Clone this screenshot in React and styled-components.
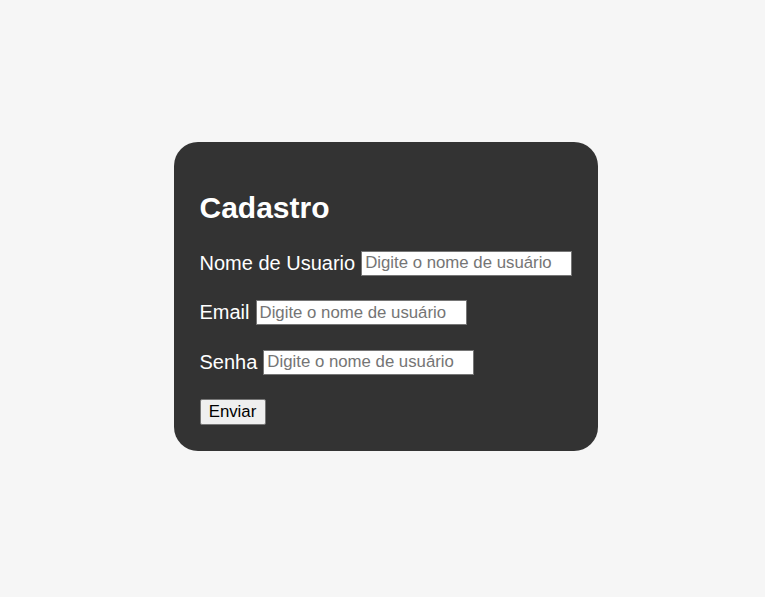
import React from 'react'
import styled, { createGlobalStyle } from 'styled-components'

const GlobalStyle = createGlobalStyle`
  html, body {
    margin: 0;
    padding: 0;
    background: #f6f6f6;
    font-family: "Liberation Sans", Arial, sans-serif;
  }
`

const Page = styled.div`
  min-height: 100vh;
  box-sizing: border-box;
  display: flex;
  align-items: center;
  justify-content: center;
  padding: 0 0 4px 6px;
`

const Card = styled.form`
  width: 424px;
  box-sizing: border-box;
  background: #333333;
  border-radius: 24px;
  padding: 51px 26px 26px 26px;
  display: flex;
  flex-direction: column;
  align-items: flex-start;
  color: #ffffff;
`

const Title = styled.h1`
  margin: 0 0 28px 0;
  font-size: 30px;
  line-height: 30px;
  font-weight: bold;
`

const Fields = styled.div`
  display: flex;
  flex-direction: column;
  gap: 24.5px;
`

const Row = styled.div`
  display: flex;
  align-items: center;
  gap: 6px;
  height: 25px;
`

const Label = styled.label`
  font-size: 20px;
  line-height: 23px;
  white-space: nowrap;
`

const Input = styled.input`
  width: 211px;
  height: 25px;
  box-sizing: border-box;
  border: 1px solid #767676;
  border-radius: 0;
  padding: 1px 3px;
  font-family: "Liberation Sans", Arial, sans-serif;
  font-size: 16.8px;
  color: #000;
  background: #fff;
  outline: none;
  &::placeholder {
    color: #757575;
  }
`

const Button = styled.button`
  width: 66px;
  height: 26px;
  box-sizing: border-box;
  border: 1px solid #767676;
  border-radius: 2px;
  background: #efefef;
  color: #000;
  font-family: "Liberation Sans", Arial, sans-serif;
  font-size: 16.8px;
  padding: 0;
  cursor: pointer;
`

const fields = [
  { id: 'usuario', label: 'Nome de Usuario', type: 'text' },
  { id: 'email', label: 'Email', type: 'email' },
  { id: 'senha', label: 'Senha', type: 'password' },
]

export default function App() {
  return (
    <>
      <GlobalStyle />
      <Page>
        <Card onSubmit={(e) => e.preventDefault()}>
          <Title>Cadastro</Title>
          <Fields>
            {fields.map((f) => (
              <Row key={f.id}>
                <Label htmlFor={f.id}>{f.label}</Label>
                <Input id={f.id} type={f.type} placeholder="Digite o nome de usuário" />
              </Row>
            ))}
            <Button type="submit">Enviar</Button>
          </Fields>
        </Card>
      </Page>
    </>
  )
}
